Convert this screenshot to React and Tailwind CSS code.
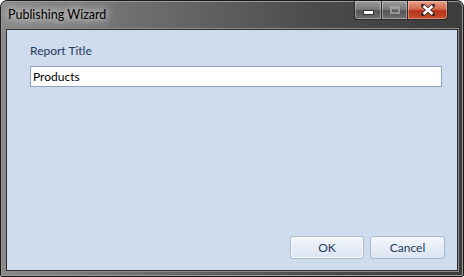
export default function App() {
  const font = { fontFamily: 'Lato, "Open Sans", sans-serif' };
  return (
    <div className="w-[464px] h-[277px] bg-white" style={font}>
      <div className="relative w-[464px] h-[277px] flex flex-col border border-[#1a1a1a] rounded-t-[7px] rounded-b-[2px] bg-[linear-gradient(90deg,#8a8a8a_0%,#6e6e6e_30%,#4a4a4a_70%,#3c3c3c_100%)] shadow-[inset_0_0_0_1px_#9a9a9a] overflow-hidden">
        <div className="h-[28px] shrink-0 flex items-center pl-[7px]">
          <span className="text-[12.5px] leading-none text-black [text-shadow:0_0_6px_#dcdcdc,0_0_10px_#d4d4d4,0_0_16px_#c8c8c8]">
            Publishing Wizard
          </span>
        </div>
        <div className="absolute top-[-1px] right-[15px] flex h-[20px]">
          <div className="w-[27px] h-full border border-[#2b2b2b] border-r-0 rounded-bl-[4px] bg-[linear-gradient(180deg,#9b9b9b_0%,#7a7a7a_45%,#555555_55%,#6e6e6e_100%)] shadow-[inset_0_0_0_1px_rgba(255,255,255,0.35)] flex items-center justify-center">
            <div className="w-[9px] h-[3px] bg-white border border-[#333] mt-[5px] box-content" />
          </div>
          <div className="w-[26px] h-full border border-[#2b2b2b] border-r-0 bg-[linear-gradient(180deg,#9b9b9b_0%,#7a7a7a_45%,#555555_55%,#6e6e6e_100%)] shadow-[inset_0_0_0_1px_rgba(255,255,255,0.35)] flex items-center justify-center">
            <div className="w-[10px] h-[8px] border-2 border-[#a8a8a8] border-t-[3px] opacity-80" />
          </div>
          <div className="w-[41px] h-full border border-[#2b2b2b] rounded-br-[4px] bg-[linear-gradient(180deg,#e8a08a_0%,#d26a4e_45%,#b5321a_55%,#c8502e_100%)] shadow-[inset_0_0_0_1px_rgba(255,255,255,0.35)] flex items-center justify-center">
            <svg width="14" height="12" viewBox="0 0 14 12">
              <path d="M2 1.5 L12 10.5 M12 1.5 L2 10.5" stroke="#3a2a28" strokeWidth="4.2" strokeLinecap="square" />
              <path d="M2.5 2 L11.5 10 M11.5 2 L2.5 10" stroke="#ffffff" strokeWidth="2.4" strokeLinecap="butt" />
            </svg>
          </div>
        </div>
        <div className="flex-1 mx-[5px] mb-[5px] border border-[#2e2e2e] shadow-[0_0_0_1px_#8c8c8c] bg-[#cfdcee] flex flex-col pl-[23px] pr-[12px] pt-[13px] pb-[11px]">
          <div className="text-[12px] leading-[16px] text-[#1e395b]">Report Title</div>
          <input
            readOnly
            value="Products"
            className="mt-[7px] h-[21px] w-[412px] border border-[#8fa3c0] bg-white px-[2px] text-[12px] text-black outline-none"
            style={font}
          />
          <div className="flex-1" />
          <div className="flex justify-end gap-[6px]">
            <button className="w-[74px] h-[23px] rounded-[3px] border border-[#a9b8cd] bg-[linear-gradient(180deg,#f4f7fb_0%,#e6edf6_50%,#dbe5f2_100%)] shadow-[inset_0_0_0_1px_#ffffff] text-[12px] text-[#1e395b]" style={font}>
              OK
            </button>
            <button className="w-[75px] h-[23px] rounded-[3px] border border-[#a9b8cd] bg-[linear-gradient(180deg,#f4f7fb_0%,#e6edf6_50%,#dbe5f2_100%)] text-[12px] text-[#1e395b]" style={font}>
              Cancel
            </button>
          </div>
        </div>
      </div>
    </div>
  );
}
